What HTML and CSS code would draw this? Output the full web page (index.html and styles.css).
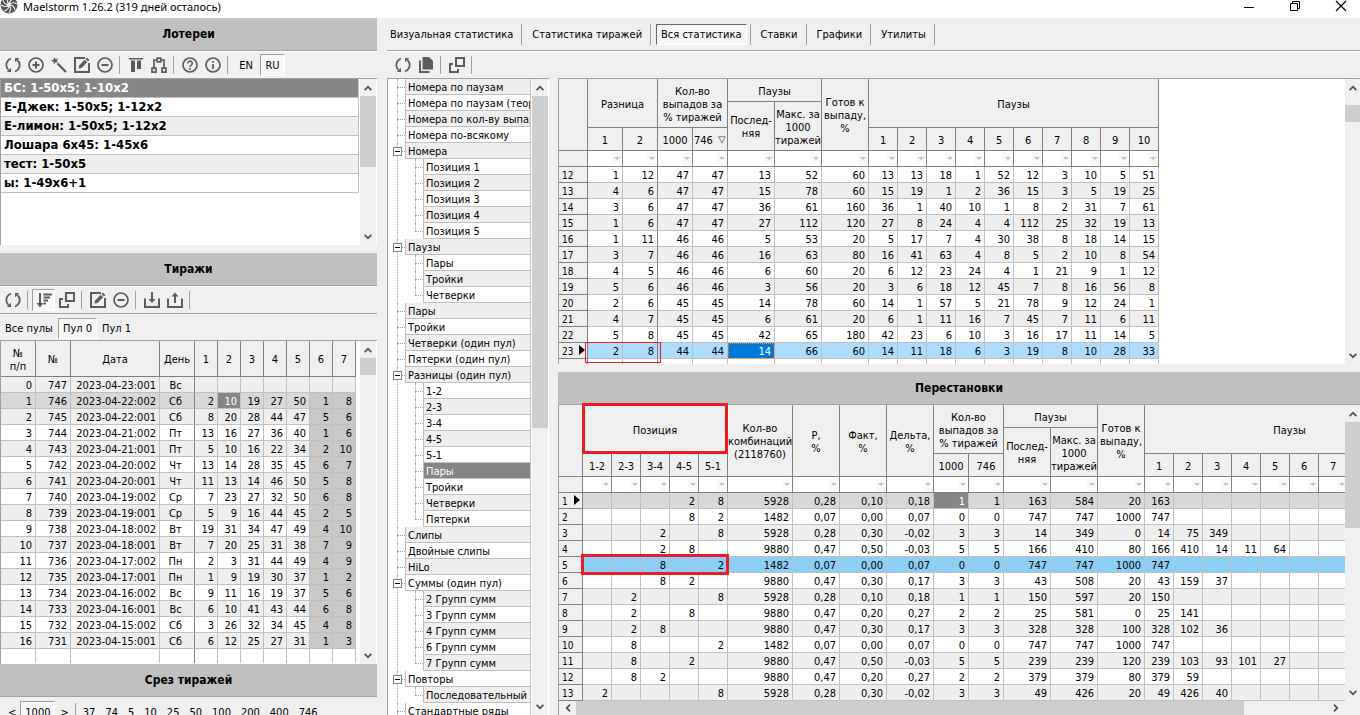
FILE: index.html
```html
<!DOCTYPE html>
<html lang="ru">
<head>
    <meta charset="UTF-8">
    <meta name="viewport" content="width=device-width, initial-scale=1.0">
    <title>Maelstorm 1.26.2</title>
    <link rel="stylesheet" href="styles.css">
</head>
<body>
    <!-- Icon set -->
    <svg class="icon-defs" aria-hidden="true">
        <symbol id="i-refresh" viewBox="0 0 16 16">
            <path d="M6 1.500A6.800 6.800 0 0 0 3.600 13M10 14.500A6.800 6.800 0 0 0 12.400 3" fill="none" stroke="currentColor" stroke-width="1.800"/>
            <path d="M1.800 15h4.200v-4.200zM14.200 1H10v4.200z" fill="currentColor"/>
        </symbol>
        <symbol id="i-plus" viewBox="0 0 16 16">
            <path d="M8 4.500v7M4.500 8h7" stroke="currentColor" stroke-width="2"/>
            <circle cx="8" cy="8" r="7" fill="none" stroke="currentColor" stroke-width="1.700"/>
        </symbol>
        <symbol id="i-minus" viewBox="0 0 16 16">
            <path d="M4.500 8h7" stroke="currentColor" stroke-width="2"/>
            <circle cx="8" cy="8" r="7" fill="none" stroke="currentColor" stroke-width="1.700"/>
        </symbol>
        <symbol id="i-wand" viewBox="0 0 16 16">
            <path d="M6.500 6.500l8.500 8.500" stroke="currentColor" stroke-width="2.200"/>
            <path d="M3.500 0l1 2.200L7 1.500 5.800 3.700 7 5.800l-2.500-.5L3 7.200l-.4-2.400L0 3.700l2.500-1z" fill="currentColor"/>
        </symbol>
        <symbol id="i-edit" viewBox="0 0 16 16">
            <path d="M11 1H1v14h14V6" fill="none" stroke="currentColor" stroke-width="2"/>
            <path d="M4.500 11.500l.6-3 5.700-5.700 2.400 2.400-5.700 5.700zM11.600 2l1.300-1.400 2.500 2.500L14 4.400z" fill="currentColor"/>
        </symbol>
        <symbol id="i-columns" viewBox="0 0 16 16">
            <path d="M1 1h14v1.500H1zM3 3.500h4V15H3zM9 3.500h4V12H9z" fill="currentColor"/>
        </symbol>
        <symbol id="i-hub" viewBox="0 0 16 16">
            <path d="M3 11V3h3.500M9.500 3H13v8" fill="none" stroke="currentColor" stroke-width="1.700"/>
            <path d="M6.200 1.200h3.600v3.600H6.200zM1 11.200h4v4H1zM11 11.200h4v4h-4z" fill="none" stroke="currentColor" stroke-width="1.700"/>
        </symbol>
        <symbol id="i-help" viewBox="0 0 16 16">
            <circle cx="8" cy="8" r="7" fill="none" stroke="currentColor" stroke-width="1.700"/>
            <path d="M5.700 6.500a2.300 2.300 0 1 1 3.500 1.900c-.8.500-1.200.8-1.200 1.700" fill="none" stroke="currentColor" stroke-width="1.600"/>
            <path d="M7.100 11h1.800v1.700H7.100z" fill="currentColor"/>
        </symbol>
        <symbol id="i-info" viewBox="0 0 16 16">
            <circle cx="8" cy="8" r="7" fill="none" stroke="currentColor" stroke-width="1.700"/>
            <path d="M7.100 7h1.800v5H7.100zM7.100 4h1.800v1.800H7.100z" fill="currentColor"/>
        </symbol>
        <symbol id="i-sort" viewBox="0 0 16 16">
            <path d="M3 1h2v10h2.500L4 15.500.500 11H3zM7.500 1.500H16v2H7.500zM7.500 4.500H14v2H7.500zM7.500 7.500H12v2H7.500zM7.500 10.500H10v2H7.500z" fill="currentColor"/>
        </symbol>
        <symbol id="i-windows" viewBox="0 0 16 16">
            <path d="M7 1h8v8H7z" fill="none" stroke="currentColor" stroke-width="2"/>
            <path d="M4 7H1v8h8v-3" fill="none" stroke="currentColor" stroke-width="2"/>
        </symbol>
        <symbol id="i-import" viewBox="0 0 16 16">
            <path d="M1 6.500V15h14V6.500" fill="none" stroke="currentColor" stroke-width="2"/>
            <path d="M7 0h2v7h2.500L8 11 4.500 7H7z" fill="currentColor"/>
        </symbol>
        <symbol id="i-export" viewBox="0 0 16 16">
            <path d="M1 6.500V15h14V6.500" fill="none" stroke="currentColor" stroke-width="2"/>
            <path d="M7 11h2V4.500h2.500L8 .5 4.500 4.500H7z" fill="currentColor"/>
        </symbol>
        <symbol id="i-copy" viewBox="0 0 16 16">
            <path d="M4.500 0H11l4 4v8.500H4.500z" fill="currentColor"/>
            <path d="M2 3.500V15h9.500" fill="none" stroke="currentColor" stroke-width="2"/>
        </symbol>
        <symbol id="i-chevron" viewBox="0 0 8 6">
            <path d="M0 4.500L4 .5l4 4-1.200 1.200L4 3 1.200 5.700z" fill="currentColor"/>
        </symbol>
    </svg>

    <header class="titlebar">
        <svg class="logo" viewBox="0 4 18 14">
            <circle cx="9" cy="9" r="8.500" fill="#555"/>
            <path d="M9 9Q6 5 9 1M9 9Q9 4 14 3M9 9Q12 5 17 8M9 9Q14 9 15 14M9 9Q12 13 9 17M9 9Q9 14 4 15M9 9Q5 12 1 9M9 9Q4 9 3 4" fill="none" stroke="#eee" stroke-width="1.100"/>
            <circle cx="9" cy="9" r="2" fill="#fff"/>
        </svg>
        <span class="titlebar-text">Maelstorm 1.26.2 (319 дней осталось)</span>
        <button class="win-btn" aria-label="Свернуть"><svg viewBox="0 0 12 12"><path d="M1 7.500h10" stroke="#000"/></svg></button>
        <button class="win-btn" aria-label="Развернуть"><svg viewBox="0 0 12 12"><path d="M3.500 3.500v-2h7v7h-2M1.500 3.500h7v7h-7z" fill="none" stroke="#000"/></svg></button>
        <button class="win-btn" aria-label="Закрыть"><svg viewBox="0 0 12 12"><path d="M1 1l10 10M11 1L1 11" stroke="#000" stroke-width="1.200"/></svg></button>
    </header>

    <div class="app">
        <aside class="sidebar">
            <h2 class="caption">Лотереи</h2>
            <div class="toolbar">
                <button class="tool" aria-label="Обновить"><svg><use href="#i-refresh"/></svg></button>
                <button class="tool" aria-label="Добавить"><svg><use href="#i-plus"/></svg></button>
                <button class="tool" aria-label="Мастер"><svg><use href="#i-wand"/></svg></button>
                <button class="tool" aria-label="Изменить"><svg><use href="#i-edit"/></svg></button>
                <button class="tool" aria-label="Удалить"><svg><use href="#i-minus"/></svg></button>
                <i class="sep"></i>
                <button class="tool" aria-label="Столбцы"><svg><use href="#i-columns"/></svg></button>
                <button class="tool" aria-label="Связи"><svg><use href="#i-hub"/></svg></button>
                <i class="sep"></i>
                <button class="tool" aria-label="Помощь"><svg><use href="#i-help"/></svg></button>
                <button class="tool" aria-label="О программе"><svg><use href="#i-info"/></svg></button>
                <i class="sep"></i>
                <button class="tool lang">EN</button>
                <button class="tool lang pressed">RU</button>
            </div>
            <div class="pane lotteries">
                <ul class="lottery-list">
                    <li class="selected">БС: 1-50x5; 1-10x2</li>
                    <li>Е-Джек: 1-50x5; 1-12x2</li>
                    <li>Е-лимон: 1-50x5; 1-12x2</li>
                    <li>Лошара 6x45: 1-45x6</li>
                    <li>тест: 1-50x5</li>
                    <li>ы: 1-49x6+1</li>
                </ul>
                <div class="scrollbar">
                    <button class="up" aria-label="Вверх"><svg><use href="#i-chevron"/></svg></button>
                    <div class="track"><div class="thumb thumb-lotteries"></div></div>
                    <button class="down" aria-label="Вниз"><svg><use href="#i-chevron"/></svg></button>
                </div>
            </div>

            <h2 class="caption caption-gap">Тиражи</h2>
            <div class="toolbar underlined">
                <button class="tool" aria-label="Обновить"><svg><use href="#i-refresh"/></svg></button>
                <i class="sep"></i>
                <button class="tool pressed" aria-label="Сортировка"><svg><use href="#i-sort"/></svg></button>
                <button class="tool" aria-label="Окна"><svg><use href="#i-windows"/></svg></button>
                <i class="sep"></i>
                <button class="tool" aria-label="Изменить"><svg><use href="#i-edit"/></svg></button>
                <button class="tool" aria-label="Удалить"><svg><use href="#i-minus"/></svg></button>
                <i class="sep"></i>
                <button class="tool" aria-label="Импорт"><svg><use href="#i-import"/></svg></button>
                <button class="tool" aria-label="Экспорт"><svg><use href="#i-export"/></svg></button>
                <i class="sep"></i>
            </div>
            <div class="pools">
                <button>Все пулы</button>
                <button class="pressed">Пул 0</button>
                <button>Пул 1</button>
            </div>
            <div class="pane draws">
                <div class="grid-view">
                    <table class="grid draws-grid">
                        <colgroup><col class="w35" span="2"><col class="w89"><col class="w35"><col class="w23" span="7"></colgroup>
                        <thead>
                            <tr class="h36"><th>№<br>п/п</th><th>№</th><th>Дата</th><th>День</th><th>1</th><th>2</th><th>3</th><th>4</th><th>5</th><th>6</th><th>7</th></tr>
                        </thead>
                        <tbody id="draws-body"></tbody>
                    </table>
                </div>
                <div class="scrollbar">
                    <button class="up" aria-label="Вверх"><svg><use href="#i-chevron"/></svg></button>
                    <div class="track"><div class="thumb thumb-draws"></div></div>
                    <button class="down" aria-label="Вниз"><svg><use href="#i-chevron"/></svg></button>
                </div>
            </div>

            <h2 class="caption">Срез тиражей</h2>
            <div class="slices">
                <button>&lt;</button>
                <button class="pressed">1000</button>
                <button>&gt;</button>
                <i class="sep"></i>
                <button>37</button>
                <button>74</button>
                <button>5</button>
                <button>10</button>
                <button>25</button>
                <button>50</button>
                <button>100</button>
                <button>200</button>
                <button>400</button>
                <button>746</button>
            </div>
        </aside>

        <main class="content">
            <nav class="tabs">
                <button>Визуальная статистика</button>
                <button>Статистика тиражей</button>
                <button class="active"><span>Вся статистика</span></button>
                <button>Ставки</button>
                <button>Графики</button>
                <button>Утилиты</button>
            </nav>
            <div class="toolbar content-toolbar">
                <button class="tool" aria-label="Обновить"><svg><use href="#i-refresh"/></svg></button>
                <button class="tool" aria-label="Копировать"><svg><use href="#i-copy"/></svg></button>
                <i class="sep"></i>
                <button class="tool" aria-label="Окна"><svg><use href="#i-windows"/></svg></button>
                <i class="sep"></i>
            </div>
            <div class="workspace">
                <div class="pane tree-pane">
                    <ul class="tree">
                        <li><span>Номера по паузам</span></li>
                        <li><span>Номера по паузам (теория)</span></li>
                        <li><span>Номера по кол-ву выпадов</span></li>
                        <li><span>Номера по-всякому</span></li>
                        <li class="open"><button aria-label="Свернуть"></button><span>Номера</span>
                            <ul>
                                <li><span>Позиция 1</span></li>
                                <li><span>Позиция 2</span></li>
                                <li><span>Позиция 3</span></li>
                                <li><span>Позиция 4</span></li>
                                <li><span>Позиция 5</span></li>
                            </ul>
                        </li>
                        <li class="open"><button aria-label="Свернуть"></button><span>Паузы</span>
                            <ul>
                                <li><span>Пары</span></li>
                                <li><span>Тройки</span></li>
                                <li><span>Четверки</span></li>
                            </ul>
                        </li>
                        <li><span>Пары</span></li>
                        <li><span>Тройки</span></li>
                        <li><span>Четверки (один пул)</span></li>
                        <li><span>Пятерки (один пул)</span></li>
                        <li class="open"><button aria-label="Свернуть"></button><span>Разницы (один пул)</span>
                            <ul>
                                <li><span>1-2</span></li>
                                <li><span>2-3</span></li>
                                <li><span>3-4</span></li>
                                <li><span>4-5</span></li>
                                <li><span>5-1</span></li>
                                <li><span class="selected">Пары</span></li>
                                <li><span>Тройки</span></li>
                                <li><span>Четверки</span></li>
                                <li><span>Пятерки</span></li>
                            </ul>
                        </li>
                        <li><span>Слипы</span></li>
                        <li><span>Двойные слипы</span></li>
                        <li><span>HiLo</span></li>
                        <li class="open"><button aria-label="Свернуть"></button><span>Суммы (один пул)</span>
                            <ul>
                                <li><span>2 Групп сумм</span></li>
                                <li><span>3 Групп сумм</span></li>
                                <li><span>4 Групп сумм</span></li>
                                <li><span>6 Групп сумм</span></li>
                                <li><span>7 Групп сумм</span></li>
                            </ul>
                        </li>
                        <li class="open"><button aria-label="Свернуть"></button><span>Повторы</span>
                            <ul>
                                <li><span>Последовательный ряд</span></li>
                            </ul>
                        </li>
                        <li><span>Стандартные ряды</span></li>
                    </ul>
                    <div class="scrollbar">
                        <button class="up" aria-label="Вверх"><svg><use href="#i-chevron"/></svg></button>
                        <div class="track"><div class="thumb thumb-tree"></div></div>
                        <button class="down" aria-label="Вниз"><svg><use href="#i-chevron"/></svg></button>
                    </div>
                </div>

                <div class="grids">
                    <div class="pane stats">
                        <div class="grid-view">
                            <table class="grid numbered frozen">
                                <colgroup><col class="w29"><col class="w35" span="4"><col class="w47" span="3"><col class="w29" span="10"></colgroup>
                                <thead>
                                    <tr class="h23">
                                        <th rowspan="3"></th>
                                        <th colspan="2" rowspan="2">Разница</th>
                                        <th colspan="2" rowspan="2">Кол-во<br>выпадов за<br>% тиражей</th>
                                        <th colspan="2">Паузы</th>
                                        <th rowspan="3">Готов к<br>выпаду,<br>%</th>
                                        <th colspan="10" rowspan="2">Паузы</th>
                                    </tr>
                                    <tr class="h26"><th rowspan="2">Послед-<br>няя</th><th rowspan="2">Макс. за<br>1000<br>тиражей</th></tr>
                                    <tr class="h23">
                                        <th>1</th><th>2</th><th>1000</th>
                                        <th class="sorted">746 <svg viewBox="0 0 8 8"><path d="M.7 .7h6.600L4 7z" fill="none" stroke="#808080"/></svg></th>
                                        <th>1</th><th>2</th><th>3</th><th>4</th><th>5</th><th>6</th><th>7</th><th>8</th><th>9</th><th>10</th>
                                    </tr>
                                    <tr class="filters" data-count="17"></tr>
                                </thead>
                                <tbody id="stats-body"></tbody>
                            </table>
                        </div>
                        <div class="scrollbar">
                            <button class="up" aria-label="Вверх"><svg><use href="#i-chevron"/></svg></button>
                            <div class="track"><div class="thumb thumb-stats"></div></div>
                            <button class="down" aria-label="Вниз"><svg><use href="#i-chevron"/></svg></button>
                        </div>
                    </div>

                    <h2 class="caption caption-gap">Перестановки</h2>
                    <div class="pane perms">
                        <div class="grid-view">
                            <table class="grid numbered">
                                <colgroup><col class="w24"><col class="w29" span="5"><col class="w65"><col class="w47" span="3"><col class="w35" span="2"><col class="w47" span="3"><col class="w29" span="10"></colgroup>
                                <thead>
                                    <tr class="h23">
                                        <th rowspan="3"></th>
                                        <th colspan="5" rowspan="2" class="marked">Позиция<i class="mark mark-head"></i></th>
                                        <th rowspan="3">Кол-во<br>комбинаций<br>(2118760)</th>
                                        <th rowspan="3">P,<br>%</th>
                                        <th rowspan="3">Факт,<br>%</th>
                                        <th rowspan="3">Дельта,<br>%</th>
                                        <th colspan="2" rowspan="2">Кол-во<br>выпадов за<br>% тиражей</th>
                                        <th colspan="2">Паузы</th>
                                        <th rowspan="3">Готов к<br>выпаду,<br>%</th>
                                        <th colspan="10" rowspan="2">Паузы</th>
                                    </tr>
                                    <tr class="h26"><th rowspan="2">Послед-<br>няя</th><th rowspan="2">Макс. за<br>1000<br>тиражей</th></tr>
                                    <tr class="h23">
                                        <th>1-2</th><th>2-3</th><th>3-4</th><th>4-5</th><th>5-1</th><th>1000</th><th>746</th>
                                        <th>1</th><th>2</th><th>3</th><th>4</th><th>5</th><th>6</th><th>7</th><th>8</th><th>9</th><th>10</th>
                                    </tr>
                                    <tr class="filters" data-count="24"></tr>
                                </thead>
                                <tbody id="perms-body"></tbody>
                            </table>
                        </div>
                        <div class="scrollbar">
                            <button class="up" aria-label="Вверх"><svg><use href="#i-chevron"/></svg></button>
                            <div class="track"><div class="thumb thumb-perms"></div></div>
                            <button class="down" aria-label="Вниз"><svg><use href="#i-chevron"/></svg></button>
                        </div>
                    </div>
                    <div class="scrollbar horizontal">
                        <button class="left" aria-label="Влево"><svg><use href="#i-chevron"/></svg></button>
                        <div class="track"><div class="thumb thumb-perms-x"></div></div>
                        <button class="right" aria-label="Вправо"><svg><use href="#i-chevron"/></svg></button>
                    </div>
                </div>
            </div>
        </main>
    </div>

    <script src="script.js"></script>
</body>
</html>
```
FILE: styles.css
```css
/* General Styles */
* {
    box-sizing: border-box;
}

body {
    margin: 0;
    height: 100vh;
    display: flex;
    flex-direction: column;
    overflow: hidden;
    background: #f0f0f0;
    color: #000;
    font-family: "DejaVu Sans Condensed", "Noto Sans", sans-serif;
    font-size: 11px;
    line-height: 13px;
}

button {
    margin: 0;
    padding: 0;
    border: none;
    background: none;
    font: inherit;
    color: inherit;
}

ul {
    margin: 0;
    padding: 0;
    list-style: none;
}

.icon-defs {
    display: none;
}

/* Title bar */
.titlebar {
    flex: none;
    display: flex;
    align-items: flex-start;
    height: 18px;
    margin-right: -4px;
    background: #fff;
    font-family: "Noto Sans", sans-serif;
    line-height: 14px;
}

.logo {
    width: 18px;
    height: 14px;
    margin-right: 5px;
}

.titlebar-text {
    flex: 1;
}

.win-btn {
    width: 46px;
    height: 12px;
}

.win-btn svg {
    display: block;
    width: 12px;
    height: 12px;
    margin: 0 auto;
}

/* Layout */
.app {
    flex: 1;
    min-height: 0;
    display: flex;
    gap: 10px;
}

.sidebar {
    flex: none;
    width: 377px;
    display: flex;
    flex-direction: column;
}

.content {
    flex: 1;
    min-width: 0;
    display: flex;
    flex-direction: column;
}

.caption {
    flex: none;
    margin: 0;
    height: 33px;
    line-height: 32px;
    background: #c0c0c0;
    border-bottom: 1px solid #a0a0a0;
    text-align: center;
    font-size: 12px;
    font-weight: bold;
}

.caption-gap {
    margin-top: 8px;
}

.pane {
    display: flex;
    min-height: 0;
    background: #fff;
    border-top: 1px solid #a0a0a0;
    border-left: 1px solid #a0a0a0;
}

.pressed {
    border: 1px solid #fff;
    border-top-color: #a0a0a0;
    border-left-color: #a0a0a0;
    background: #f7f7f7;
}

/* Toolbars */
.toolbar {
    flex: none;
    display: flex;
    align-items: center;
    height: 27px;
    padding-left: 1px;
    border-top: 1px solid #fff;
}

.underlined {
    height: 28px;
    border-bottom: 1px solid #a0a0a0;
}

.content-toolbar {
    padding-left: 4px;
}

.tool {
    flex: none;
    display: flex;
    align-items: center;
    justify-content: center;
    width: 23px;
    height: 22px;
    color: #5c5c5c;
}

.tool svg {
    width: 16px;
    height: 16px;
}

.lang {
    width: 28px;
    color: #000;
}

.lang.pressed {
    width: 25px;
}

.sep {
    flex: none;
    width: 1px;
    height: 18px;
    margin: 0 4px 0 3px;
    background: #a0a0a0;
}

/* Lottery list */
.lotteries {
    flex: none;
    height: 167px;
}

.lottery-list {
    flex: 1;
    margin-right: 1px;
    font-size: 13px;
    font-weight: bold;
}

.lottery-list li {
    height: 19px;
    padding-left: 3px;
    line-height: 18px;
    border-bottom: 1px solid #c0c0c0;
    border-right: 1px solid #c0c0c0;
}

.lottery-list li:nth-child(odd) {
    background: #efefef;
}

.lottery-list li.selected {
    background: #868686;
    color: #fff;
}

/* Pools and slices */
.pools {
    flex: none;
    display: flex;
    align-items: center;
    height: 26px;
    padding-top: 3px;
}

.pools button {
    height: 21px;
    padding: 0 5px;
}

.pools .pressed {
    padding: 0 4px;
}

.slices {
    flex: none;
    display: flex;
    align-items: center;
    height: 18px;
    padding-top: 12px;
}

.slices button {
    height: 22px;
    padding: 0 5px;
}

.slices button:first-child {
    padding: 0 4px 0 8px;
}

.slices .pressed {
    padding: 0 4px;
}

.slices .sep {
    margin: 0 2px 0 1px;
}

/* Data grids */
.draws {
    flex: 1;
}

.grid-view {
    flex: 1;
    min-width: 0;
    overflow: hidden;
}

.grid {
    table-layout: fixed;
    width: 1px;
    border-collapse: separate;
    border-spacing: 0;
}

.w23 { width: 23px; }
.w24 { width: 24px; }
.w29 { width: 29px; }
.w35 { width: 35px; }
.w47 { width: 47px; }
.w65 { width: 65px; }
.w89 { width: 89px; }
.h23 { height: 23px; }
.h26 { height: 26px; }
.h36 { height: 36px; }

.grid th {
    padding: 2px 0 0;
    background: #f0f0f0;
    border-right: 1px solid #808080;
    border-bottom: 1px solid #808080;
    font-weight: normal;
    text-align: center;
    white-space: nowrap;
}

.grid td {
    height: 16px;
    padding: 2px 3px 0 0;
    line-height: 13px;
    border-right: 1px solid #c0c0c0;
    border-bottom: 1px solid #c0c0c0;
    text-align: right;
    white-space: nowrap;
}

.grid .shade td {
    background: #efefef;
}

.grid .current td {
    background: #d8d8d8;
}

.grid .active-row td {
    background: #aedcff;
}

.grid .match td {
    background: #8dcef4;
}

.grid td.cell-selected {
    background: #868686;
    color: #fff;
}

.grid td.cell-focus {
    background: #0078d7;
    color: #fff;
    outline: 1px dotted #ff8728;
    outline-offset: -1px;
}

.grid .tail td {
    height: 14px;
    border-bottom: none;
}

.draws-grid td:nth-child(4) {
    text-align: center;
    border-right-color: #808080;
}

.draws-grid .drawn td:nth-child(n+10) {
    background: #c8c8c8;
}

.grid .filters td {
    padding: 0 1px 0 0;
    border-color: #808080;
}

.filters button {
    display: flex;
    align-items: center;
    justify-content: center;
    width: 9px;
    height: 13px;
    margin-left: auto;
    background: #f9f9f9;
}

.filters button::after {
    content: "";
    width: 0;
    height: 0;
    border: 3px solid transparent;
    border-top-color: #c0c0c0;
    border-bottom: none;
}

.sorted svg {
    width: 8px;
    height: 8px;
    margin-left: 2px;
}

/* Row number column */
.grid.numbered td:first-child {
    position: relative;
    padding-left: 3px;
    background: #f0f0f0;
    border-color: #808080;
    text-align: left;
    font-size: 10px;
}

.frozen td:nth-child(3) {
    border-right-color: #808080;
}

.grid.numbered .pointer td:first-child::after {
    content: "";
    position: absolute;
    top: 2px;
    right: 2px;
    border: 5px solid transparent;
    border-left: 6px solid #000;
    border-right: none;
}

/* Red frames */
.marked {
    position: relative;
}

.mark {
    position: absolute;
    z-index: 1;
    border: 3px solid #ed1c24;
}

.mark-head {
    inset: -2px -1px -1px;
}

.mark-row {
    top: -3px;
    left: -2px;
    width: 148px;
    height: 21px;
}

.mark-thin {
    top: -1px;
    left: -3px;
    width: 76px;
    height: 21px;
    border-width: 1px;
}

/* Scrollbars */
.scrollbar {
    flex: none;
    display: flex;
    flex-direction: column;
    width: 17px;
    background: #f0f0f0;
    border-right: 1px solid #fff;
}

.scrollbar button {
    flex: none;
    display: flex;
    align-items: center;
    justify-content: center;
    height: 17px;
    color: #505050;
}

.scrollbar svg {
    width: 8px;
    height: 6px;
}

.scrollbar .down svg {
    transform: rotate(180deg);
}

.scrollbar .left svg {
    transform: rotate(-90deg);
}

.scrollbar .right svg {
    transform: rotate(90deg);
}

.track {
    flex: 1;
}

.thumb {
    background: #cdcdcd;
}

.thumb-lotteries { height: 71px; }
.thumb-draws { height: 17px; }
.thumb-tree { height: 332px; }
.thumb-stats { height: 17px; margin-top: 9px; }
.thumb-perms { height: 106px; }

.horizontal {
    flex-direction: row;
    width: auto;
    height: 14px;
    border-left: 1px solid #a0a0a0;
    padding-right: 16px;
}

.horizontal button {
    width: 17px;
    height: 14px;
}

.thumb-perms-x {
    width: 89%;
    height: 14px;
}

/* Tabs */
.tabs {
    flex: none;
    display: flex;
    align-items: center;
    height: 33px;
    border-bottom: 1px solid #a0a0a0;
}

.tabs button {
    height: 21px;
    padding: 0 8px 0 10px;
    border-right: 1px solid #a0a0a0;
}

.tabs button:first-child {
    padding-left: 3px;
}

.tabs .active {
    padding: 0 3px 0 5px;
}

.tabs .active span {
    display: block;
    padding: 3px 4px;
    background: #f7f7f7;
    border: 1px solid #fff;
    border-top-color: #696969;
    border-left-color: #696969;
}

/* Tree */
.workspace {
    flex: 1;
    min-height: 0;
    display: flex;
    gap: 9px;
}

.tree-pane {
    flex: none;
    width: 162px;
    overflow: hidden;
}

.tree {
    flex: 1;
    overflow: hidden;
    margin-right: 1px;
}

.tree li {
    position: relative;
    padding-left: 17px;
}

.tree ul {
    margin-left: 1px;
}

/* dotted connector lines */
.tree li::before {
    content: "";
    position: absolute;
    top: 0;
    bottom: 0;
    left: 9px;
    border-left: 1px dotted #a0a0a0;
}

.tree li::after {
    content: "";
    position: absolute;
    top: 8px;
    left: 9px;
    width: 8px;
    border-top: 1px dotted #a0a0a0;
}

.tree ul li:last-child::before {
    bottom: auto;
    height: 8px;
}

.tree span {
    display: block;
    height: 16px;
    padding-left: 2px;
    line-height: 18px;
    overflow: hidden;
    white-space: nowrap;
    border: 1px solid #c0c0c0;
    border-top: none;
}

.tree .shade {
    background: #efefef;
}

.tree span.selected {
    background: #868686;
    color: #fff;
}

.tree button {
    position: absolute;
    z-index: 1;
    top: 4px;
    left: 5px;
    width: 9px;
    height: 9px;
    background: linear-gradient(#000, #000) center / 5px 1px no-repeat #fff;
    border: 1px solid #808080;
}

/* Right hand grids */
.grids {
    flex: 1;
    min-width: 0;
    display: flex;
    flex-direction: column;
}

.stats {
    flex: none;
    height: 286px;
}

.perms {
    flex: 1;
    border-top: none;
}

/* lets the red frame reach over the caption */
.perms .grid-view {
    overflow-x: clip;
    overflow-y: visible;
}

.grids .scrollbar {
    width: 15px;
    border-right: none;
}

.grids .horizontal {
    width: auto;
}
```
FILE: script.js
```js
// index, number, date, weekday, balls
const draws = [
    "0 747 2023-04-23:001 Вс",
    "1 746 2023-04-22:002 Сб 2 10 19 27 50 1 8",
    "2 745 2023-04-22:001 Сб 8 20 28 44 47 5 6",
    "3 744 2023-04-21:002 Пт 13 16 27 36 40 1 6",
    "4 743 2023-04-21:001 Пт 5 10 16 22 34 2 10",
    "5 742 2023-04-20:002 Чт 13 14 28 35 45 6 7",
    "6 741 2023-04-20:001 Чт 11 13 14 46 50 5 8",
    "7 740 2023-04-19:002 Ср 7 23 27 32 50 6 8",
    "8 739 2023-04-19:001 Ср 5 9 16 44 45 2 5",
    "9 738 2023-04-18:002 Вт 19 31 34 47 49 4 10",
    "10 737 2023-04-18:001 Вт 7 20 25 31 38 7 9",
    "11 736 2023-04-17:002 Пн 2 3 31 44 49 4 9",
    "12 735 2023-04-17:001 Пн 1 9 19 30 37 1 2",
    "13 734 2023-04-16:002 Вс 9 11 16 19 37 5 6",
    "14 733 2023-04-16:001 Вс 6 10 41 43 44 6 8",
    "15 732 2023-04-15:002 Сб 3 26 32 34 45 4 8",
    "16 731 2023-04-15:001 Сб 6 12 25 27 31 1 3"
];

const stats = [
    "12 1 12 47 47 13 52 60 13 13 18 1 52 12 3 10 5 51",
    "13 4 6 47 47 15 78 60 15 19 1 2 36 15 3 5 19 25",
    "14 3 6 47 47 36 61 160 36 1 40 10 1 8 2 31 7 61",
    "15 1 6 47 47 27 112 120 27 8 24 4 4 112 25 32 19 13",
    "16 1 11 46 46 5 53 20 5 17 7 4 30 38 8 18 14 15",
    "17 3 7 46 46 16 63 80 16 41 63 4 8 5 2 10 8 54",
    "18 4 5 46 46 6 60 20 6 12 23 24 4 1 21 9 1 12",
    "19 5 6 46 46 3 56 20 3 6 18 12 45 7 8 16 56 8",
    "20 2 6 45 45 14 78 60 14 1 57 5 21 78 9 12 24 1",
    "21 4 7 45 45 6 61 20 6 1 11 16 7 45 7 11 6 11",
    "22 5 8 45 45 42 65 180 42 23 6 10 3 16 17 11 14 5",
    "23 2 8 44 44 14 66 60 14 11 18 6 3 19 8 10 28 33"
];

// "_" is an empty cell
const perms = [
    "1 _ _ _ 2 8 5928 0,28 0,10 0,18 1 1 163 584 20 163",
    "2 _ _ _ 8 2 1482 0,07 0,00 0,07 0 0 747 747 1000 747",
    "3 _ _ 2 _ 8 5928 0,28 0,30 -0,02 3 3 14 349 0 14 75 349",
    "4 _ _ 2 8 _ 9880 0,47 0,50 -0,03 5 5 166 410 80 166 410 14 11 64",
    "5 _ _ 8 _ 2 1482 0,07 0,00 0,07 0 0 747 747 1000 747",
    "6 _ _ 8 2 _ 9880 0,47 0,30 0,17 3 3 43 508 20 43 159 37",
    "7 _ 2 _ _ 8 5928 0,28 0,10 0,18 1 1 150 597 20 150",
    "8 _ 2 _ 8 _ 9880 0,47 0,20 0,27 2 2 25 581 0 25 141",
    "9 _ 2 8 _ _ 9880 0,47 0,30 0,17 3 3 328 328 100 328 102 36",
    "10 _ 8 _ _ 2 1482 0,07 0,00 0,07 0 0 747 747 1000 747",
    "11 _ 8 _ 2 _ 9880 0,47 0,50 -0,03 5 5 239 239 120 239 103 93 101 27",
    "12 _ 8 2 _ _ 9880 0,47 0,20 0,27 2 2 379 379 80 379 59",
    "13 2 _ _ _ 8 5928 0,28 0,30 -0,02 3 3 49 426 20 49 426 40"
];

function fillBody(id, rows, columns, shadeParity) {
    const body = document.getElementById(id);
    rows.forEach((row, r) => {
        const values = row.split(" ");
        const tr = body.insertRow();
        if (r % 2 === shadeParity) tr.classList.add("shade");
        if (values.length > 4) tr.classList.add("drawn");
        for (let c = 0; c < columns; c++) {
            const value = values[c];
            tr.insertCell().textContent = value && value !== "_" ? value : "";
        }
    });
    return body;
}

function addTail(body, columns) {
    const tr = body.insertRow();
    tr.className = "tail";
    for (let c = 0; c < columns; c++) tr.insertCell();
}

function addMark(cell, name) {
    const mark = document.createElement("i");
    mark.className = "mark " + name;
    cell.classList.add("marked");
    cell.appendChild(mark);
}

// Filter rows
document.querySelectorAll(".filters").forEach(tr => {
    tr.insertCell();
    for (let i = 0; i < Number(tr.dataset.count); i++) {
        const button = document.createElement("button");
        button.setAttribute("aria-label", "Фильтр");
        tr.insertCell().appendChild(button);
    }
});

const drawsBody = fillBody("draws-body", draws, 11, 0);
drawsBody.rows[1].classList.add("current");
drawsBody.rows[1].cells[5].className = "cell-selected";
addTail(drawsBody, 11);

const statsBody = fillBody("stats-body", stats, 18, 1);
statsBody.rows[11].classList.add("active-row", "pointer");
statsBody.rows[11].cells[5].className = "cell-focus";
addMark(statsBody.rows[11].cells[1], "mark-thin");
addTail(statsBody, 18);

const permsBody = fillBody("perms-body", perms, 25, 0);
permsBody.rows[0].classList.add("current", "pointer");
permsBody.rows[0].cells[10].className = "cell-selected";
permsBody.rows[4].classList.add("match");
addMark(permsBody.rows[4].cells[1], "mark-row");

// Zebra through all levels of the tree
document.querySelectorAll(".tree span").forEach((item, i) => {
    if (i % 2 === 0) item.classList.add("shade");
});
```
